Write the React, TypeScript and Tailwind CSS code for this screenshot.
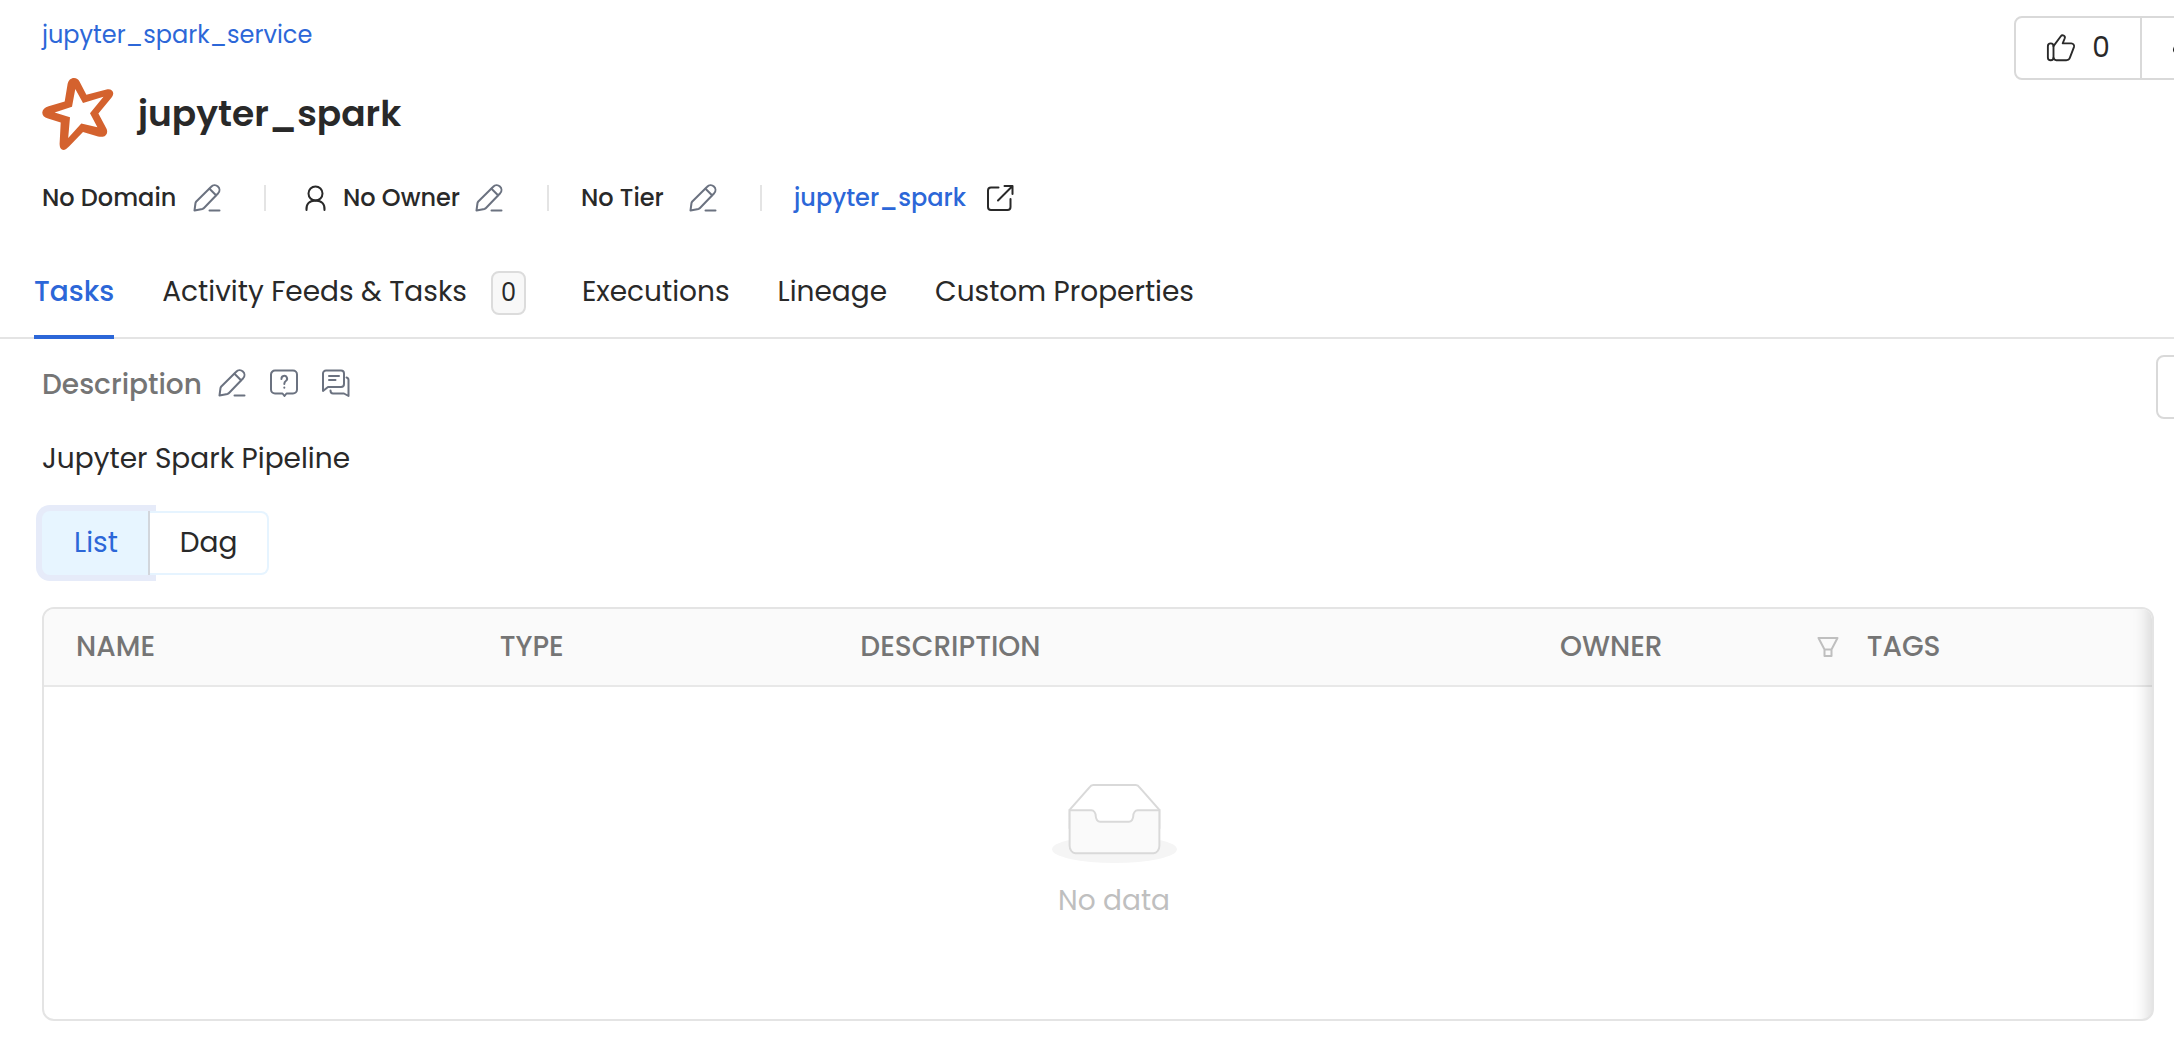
import type { ReactNode } from "react";

function PencilIcon() {
  return (
    <svg viewBox="0 0 28 28" className="size-7 shrink-0" fill="none" stroke="#6b7280" strokeWidth="2" strokeLinejoin="round" strokeLinecap="round" aria-hidden="true">
      <path d="M1.500 26.500 L2.500 19 Q2.700 18.200 3.300 17.500 L18.200 2.800 A4.300 4.300 0 0 1 25.200 9.200 L11 24 Q10.400 24.600 9.500 24.900 Z" />
      <path d="M16.500 4.800 L23 11.200" />
      <path d="M16.500 26.500 H26.500" />
    </svg>
  );
}

function StarIcon() {
  return (
    <svg viewBox="0 0 72 72" className="size-[72px] shrink-0" fill="#d4622e" fillRule="evenodd" aria-hidden="true">
      <path d="M32 0 C34.600 0 36.400 1.400 37.500 3.400 L44.400 16.800 L64.500 11.400 C68.500 10.400 71.600 12.600 71.200 15.800 C71 17.400 70.300 18.700 69.200 20 L56.400 35.400 L64.400 50.600 C66.400 54.600 64.400 58.200 60.800 58.700 C59 58.900 57.600 58.800 56 58.400 L41 54 L27 68.400 C24.800 70.600 22.600 72.400 20.400 71.800 C18.600 71.200 17.700 69.400 17.600 66 L18.700 44.400 L6 40.600 C2 39.200 .2 37.200 .3 34.500 C.4 31.800 2.800 29.400 6.600 28.200 L22.700 23.600 L25.600 6 C26.400 2.200 28.800 0 32 0 Z M33.300 11 L30 28.700 L12.600 34.500 L28 39.300 L26.200 60 L39.300 45.400 L55.400 49.300 L48 35.300 L61.500 18.800 L41 25 Z" />
    </svg>
  );
}

function UserIcon() {
  return (
    <svg viewBox="0 0 24 28" className="h-7 w-6 shrink-0" fill="none" stroke="#292929" strokeWidth="2" strokeLinecap="round" aria-hidden="true">
      <circle cx="11.500" cy="9.500" r="7" />
      <path d="M2.500 26 C2 20 5 16.800 11.500 16.500 C18 16.800 21 20 20.500 26" />
    </svg>
  );
}

function ExternalIcon() {
  return (
    <svg viewBox="0 0 28 28" className="size-7 shrink-0" fill="none" stroke="#292929" strokeWidth="2" strokeLinecap="round" strokeLinejoin="round" aria-hidden="true">
      <path d="M12.500 3.500 H5 A3 3 0 0 0 2 6.500 V23 A3 3 0 0 0 5 26 H21.500 A3 3 0 0 0 24.500 23 V15" />
      <path d="M12 16.500 L26 2.500 M18.500 2 H26.500 V10" />
    </svg>
  );
}

function QuestionIcon() {
  return (
    <svg viewBox="0 0 28 28" className="size-7 shrink-0" fill="none" stroke="#6b7280" strokeWidth="2" strokeLinecap="round" strokeLinejoin="round" aria-hidden="true">
      <path d="M5 1.500 H23 A4 4 0 0 1 27 5.500 V20.500 A4 4 0 0 1 23 24.500 H16.500 L14.500 27 L12.500 24.500 H5 A4 4 0 0 1 1 20.500 V5.500 A4 4 0 0 1 5 1.500 Z" />
      <path d="M11.500 10 A2.800 2.800 0 1 1 15.800 12 Q14.300 13 14.300 15" />
      <path d="M14.300 18.500 V18.700" />
    </svg>
  );
}

function ThreadIcon() {
  return (
    <svg viewBox="0 0 28 28" className="size-7 shrink-0" fill="none" stroke="#6b7280" strokeWidth="2" strokeLinejoin="round" strokeLinecap="round" aria-hidden="true">
      <path d="M4 1.500 H19 A3 3 0 0 1 22 4.500 V15 A3 3 0 0 1 19 18 H6 L1 22 V4.500 A3 3 0 0 1 4 1.500 Z" />
      <path d="M7 7 H17 M7 11 H13.500" />
      <path d="M24.500 8.500 Q26.500 9 26.500 11 V27 L22 24.500 H11 Q8.500 24.500 8.500 21.500" />
    </svg>
  );
}

function ThumbIcon({ down = false }: { down?: boolean }) {
  return (
    <svg viewBox="0 0 32 32" className={down ? "size-[30px] shrink-0 rotate-180" : "size-[30px] shrink-0"} fill="none" stroke="#292929" strokeWidth="2" strokeLinejoin="round" strokeLinecap="round" aria-hidden="true">
      <rect x="2" y="11" width="6" height="18" rx="3" />
      <path d="M8 14 L15.800 3.400 A2.400 2.400 0 0 1 20 5.600 L17.800 11 H27 A3 3 0 0 1 29.800 15 L25.600 26 A4 4 0 0 1 22 29 H11 Q8.600 29 8 26.500" />
    </svg>
  );
}

function FilterIcon() {
  return (
    <svg viewBox="0 0 22 22" className="size-[22px] shrink-0" fill="none" stroke="#bfbfbf" strokeWidth="2" strokeLinejoin="round" aria-hidden="true">
      <path d="M1.500 2 H20.500 L14.500 13.500 H7.500 Z M7.500 13.500 V20 H14.500 V13.500" />
    </svg>
  );
}

function EmptyIcon() {
  return (
    <svg viewBox="0 0 64 41" className="h-20 w-[125px]" aria-hidden="true">
      <g transform="translate(0 1)" fill="none" fillRule="evenodd">
        <ellipse fill="#f5f5f5" cx="32" cy="33" rx="32" ry="7" />
        <g fillRule="nonzero" stroke="#d9d9d9">
          <path d="M55 12.760L44.854 1.258C44.367.474 43.656 0 42.907 0H21.093c-.749 0-1.460.474-1.947 1.257L9 12.761V22h46v-9.240z" />
          <path fill="#fafafa" d="M41.613 15.931c0-1.605.994-2.930 2.227-2.931H55v18.137C55 33.260 53.680 35 52.050 35h-40.100C10.320 35 9 33.259 9 31.137V13h11.160c1.233 0 2.227 1.323 2.227 2.928v.022c0 1.605 1.005 2.901 2.237 2.901h14.752c1.232 0 2.237-1.308 2.237-2.913v-.007z" />
        </g>
      </g>
    </svg>
  );
}

function Divider() {
  return <span className="h-[26px] w-[2px] shrink-0 bg-[#e4e4e4]" />;
}

function IconButton({ label, children }: { label: string; children: ReactNode }) {
  return (
    <button type="button" aria-label={label} className="flex shrink-0">
      {children}
    </button>
  );
}

const tabs = ["Tasks", "Activity Feeds & Tasks", "Executions", "Lineage", "Custom Properties"];

export default function App() {
  return (
    <div className="min-h-screen overflow-hidden bg-white font-['Poppins','Inter',sans-serif] text-[28px] leading-10 text-[#292929]">
      <header className="flex items-start justify-between pt-4 pl-[42px]">
        <div>
          <nav aria-label="Breadcrumb" className="flex">
            <a href="#service" className="text-2xl leading-[38px] text-[#2c67d8]">jupyter_spark_service</a>
          </nav>
          <div className="mt-6 flex items-center gap-6">
            <StarIcon />
            <h1 className="text-4xl font-semibold">jupyter_spark</h1>
          </div>
          <div className="mt-[30px] flex items-center text-2xl leading-9 font-medium whitespace-nowrap">
            <div className="flex w-[222px] items-center gap-[17px]">
              No Domain
              <IconButton label="Edit domain"><PencilIcon /></IconButton>
            </div>
            <Divider />
            <div className="flex w-[281px] items-center gap-[15px] pl-[38px]">
              <UserIcon />
              No Owner
              <IconButton label="Edit owner"><PencilIcon /></IconButton>
            </div>
            <Divider />
            <div className="flex w-[211px] items-center gap-[25px] pl-8">
              No Tier
              <IconButton label="Edit tier"><PencilIcon /></IconButton>
            </div>
            <Divider />
            <a href="#source" className="flex items-center gap-5 pl-8 text-[#2c67d8]">
              jupyter_spark
              <ExternalIcon />
            </a>
          </div>
        </div>
        <div className="-mr-24 flex h-16 shrink-0 rounded-lg border-2 border-[#d9d9d9]">
          <button type="button" aria-label="Up vote" className="flex w-[124px] items-center justify-center gap-4">
            <ThumbIcon />0
          </button>
          <button type="button" aria-label="Down vote" className="flex w-32 items-center border-l-2 border-[#d9d9d9] pl-[30px]">
            <ThumbIcon down />
          </button>
        </div>
      </header>

      <div role="tablist" className="mt-[38px] flex h-[85px] items-stretch gap-12 border-b-2 border-[#e4e4e4] pl-[34px] whitespace-nowrap">
        {tabs.map((tab, i) => (
          <button
            key={tab}
            type="button"
            role="tab"
            aria-selected={i === 0}
            className={
              i === 0
                ? "-mb-[2px] flex items-center border-b-4 border-[#2c67d8] pb-[6px] font-medium text-[#2c67d8]"
                : "flex items-center gap-6 pb-2"
            }
          >
            {tab}
            {i === 1 && (
              <span className="mt-0.5 mr-2 flex h-11 w-[35px] items-center justify-center rounded-lg border-2 border-[#dcdcdc] bg-[#f8f8f8] text-2xl">0</span>
            )}
          </button>
        ))}
      </div>

      <main className="pr-5 pl-[42px]">
        <div className="flex items-start justify-between pt-4">
          <div className="flex items-start gap-4 pt-[10px]">
            <h2 className="font-medium text-[#757575]">Description</h2>
            <div className="flex gap-6 pt-1">
              <IconButton label="Edit description"><PencilIcon /></IconButton>
              <IconButton label="Request description"><QuestionIcon /></IconButton>
              <IconButton label="Conversations"><ThreadIcon /></IconButton>
            </div>
          </div>
          <button type="button" aria-label="Expand panel" className="-mr-[86px] h-16 w-[84px] shrink-0 rounded-lg border-2 border-[#d9d9d9]" />
        </div>
        <p className="mt-5">Jupyter Spark Pipeline</p>

        <div className="mt-8 flex">
          <button type="button" aria-pressed="true" className="flex h-16 w-[108px] items-center justify-center rounded-l-lg border-r-2 border-[#d2d6dc] bg-[#e7f5ff] pl-0.5 text-[#2c67d8] shadow-[0_0_0_6px_#e6ebf9]">
            List
          </button>
          <button type="button" aria-pressed="false" className="relative flex h-16 w-[119px] items-center justify-center rounded-r-lg border-2 border-l-0 border-[#e6f4ff] bg-white">
            Dag
          </button>
        </div>

        <div className="relative mt-8 overflow-hidden rounded-xl border-2 border-[#e4e4e4]">
          <table className="w-[calc(100%+32px)] table-fixed border-collapse text-left">
            <colgroup>
              <col className="w-[19.8%]" />
              <col className="w-[16.85%]" />
              <col className="w-[32.7%]" />
              <col className="w-[14.7%]" />
              <col />
            </colgroup>
            <thead className="bg-[#fafafa] text-[#757575]">
              <tr className="h-[77px] border-b-2 border-[#e8e8e8]">
                <th scope="col" className="px-8 font-medium">NAME</th>
                <th scope="col" className="px-8 font-medium">TYPE</th>
                <th scope="col" className="px-8 font-medium">DESCRIPTION</th>
                <th scope="col" className="pr-1 pl-8 font-medium">
                  <div className="flex items-center justify-between">
                    OWNER
                    <IconButton label="Filter by owner"><FilterIcon /></IconButton>
                  </div>
                </th>
                <th scope="col" className="pr-8 pl-6 font-medium">TAGS</th>
              </tr>
            </thead>
            <tbody>
              <tr>
                <td colSpan={5} className="pt-24 pb-[98px]">
                  <div className="flex flex-col items-center gap-[18px] text-[#bfbfbf]">
                    <EmptyIcon />
                    No data
                  </div>
                </td>
              </tr>
            </tbody>
          </table>
          <div className="pointer-events-none absolute inset-y-0 right-0 w-8 shadow-[inset_-20px_0_16px_-16px_#00000026]" />
        </div>
      </main>
    </div>
  );
}
